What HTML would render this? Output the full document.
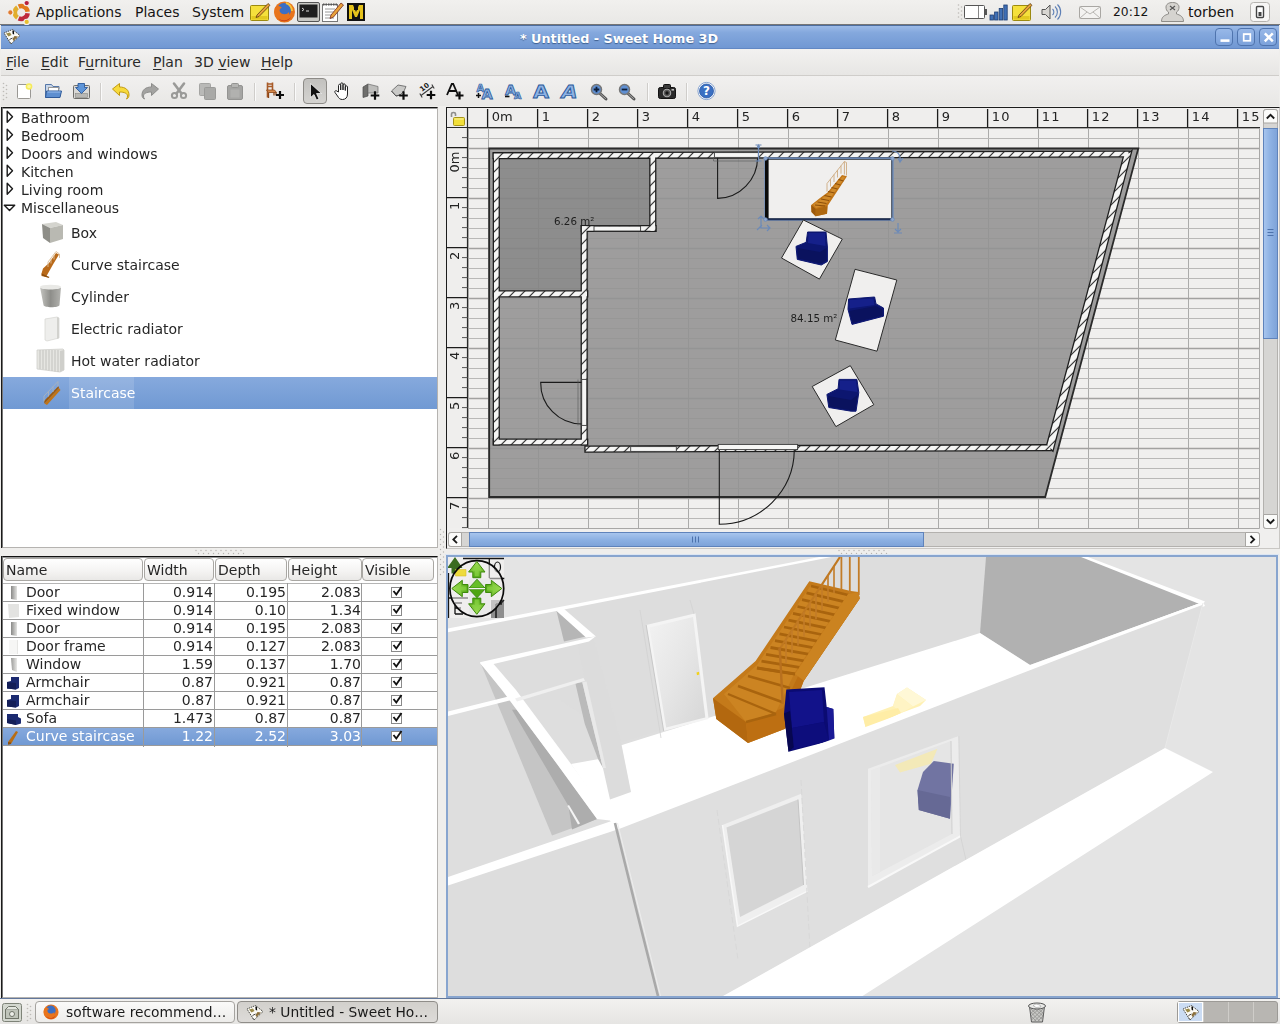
<!DOCTYPE html>
<html lang="en">
<head>
<meta charset="utf-8">
<title>* Untitled - Sweet Home 3D</title>
<style>
html,body{margin:0;padding:0}
body{width:1280px;height:1024px;position:relative;overflow:hidden;background:#EFEEEC;font-family:"DejaVu Sans","Liberation Sans",sans-serif;font-size:14px;color:#1c1c1c;line-height:1}
.a{position:absolute}
.t{position:absolute;white-space:pre;line-height:18px;height:18px}
svg{position:absolute;overflow:visible}
/* top panel */
#panel{left:0;top:0;width:1280px;height:24px;background:linear-gradient(#F1F0EE,#E9E8E6);border-bottom:1px solid #767676}
#panel .t{color:#141414;top:3px}
/* title bar */
#title{left:1px;top:25px;width:1278px;height:22px;border-bottom:1px solid #6288C4;background:linear-gradient(#9DBBE8 0%,#84A8DD 30%,#7198D3 100%);border-top:1px solid #4D6E9F}
#title .cap{left:0;width:1236px;text-align:center;top:4px;font-weight:bold;font-size:12.800px;color:#fff;text-shadow:0 1px 1px #3f5f8f}
.wb{position:absolute;top:2px;width:18px;height:18px;box-sizing:border-box;border:1px solid #4F74AE;border-radius:4px;background:linear-gradient(#98B8E8,#7CA2DB)}
/* menu */
#menu{left:1px;top:49px;width:1278px;height:26px;background:linear-gradient(#F2F1F0,#E7E6E4);border-bottom:1px solid #CFCDCA}
#menu .t{top:4px;color:#2a2a2a}
#menu u{text-decoration:underline;text-underline-offset:2px}
#tool{left:1px;top:76px;width:1278px;height:30px;background:linear-gradient(#F1F0EF,#E8E7E5)}
.sep{position:absolute;top:7px;width:1px;height:18px;background:#CFCDCA;border-right:1px solid #fafafa}
/* panels */
#tree{left:2px;top:107px;width:434px;height:439px;background:#fff;box-shadow:-1px 0 0 #1a1a1a,inset 0 1px 0 #9a9a9a;border-top:1px solid #111;border-left:1px solid #777;border-right:1px solid #B5B3B0;border-bottom:1px solid #B5B3B0}
#tree .t{left:18px;color:#262626}
#tree .c{left:68px}
#table{left:2px;top:556px;width:434px;height:440px;background:#fff;box-shadow:-1px 0 0 #1a1a1a,inset 0 1px 0 #9a9a9a;border-top:1px solid #111;border-left:1px solid #777;border-right:1px solid #B5B3B0;border-bottom:1px solid #B5B3B0}
.hd{position:absolute;top:1px;height:23px;border:1px solid #A9A7A3;border-radius:4px;background:linear-gradient(#FFFFFF,#F4F3F2 60%,#E9E8E6);box-sizing:border-box}
.hd span{position:absolute;left:2px;top:2px;line-height:18px;color:#262626}
.row{position:absolute;left:0;width:434px;height:17px;border-bottom:1px solid #9A9A9A}
.row .t{top:-1px;color:#262626}
.row .n{left:23px}
.row .r{text-align:right}
.vl{position:absolute;top:26px;width:1px;height:164px;background:#9A9A9A}
.cb{position:absolute;left:388px;top:3px;width:11px;height:11px;border:1px solid #8a8a8a;background:#fff;box-sizing:border-box}
.sel{background:linear-gradient(#86A9DD,#7099D3)}
.sel .t{color:#fff}
/* bottom panel */
#bottom{left:0;top:999px;width:1280px;height:25px;background:linear-gradient(#F2F1EF,#E6E5E3)}
.task{position:absolute;top:3px;height:20px;border:1px solid #A5A39F;border-radius:4px;box-sizing:border-box}
</style>
</head>
<body>
<div id="root" style="position:absolute;left:0;top:0;width:1280px;height:1024px;opacity:.999">
<div id="panel" class="a">
<svg style="left:4px;top:0px" width="32" height="25" viewBox="0 0 32 25"><path d="M13.49 17.68A6.4 6.4 0 0 1 13.49 7.32" fill="none" stroke="#E2AE2C" stroke-width="4.500"/><path d="M14.65 6.65A6.4 6.4 0 0 1 23.61 11.83" fill="none" stroke="#E27A1C" stroke-width="4.500"/><path d="M23.61 13.17A6.4 6.4 0 0 1 14.65 18.35" fill="none" stroke="#BE2A3C" stroke-width="4.500"/><circle cx="6.35" cy="12.50" r="2.700" fill="#E07A30" stroke="#F4EFEA" stroke-width="1.100"/><circle cx="22.70" cy="3.06" r="2.700" fill="#B8203C" stroke="#F4EFEA" stroke-width="1.100"/><circle cx="22.70" cy="21.94" r="2.700" fill="#E8C030" stroke="#F4EFEA" stroke-width="1.100"/></svg>
<span class="t" style="left:36px">Applications</span>
<span class="t" style="left:135px">Places</span>
<span class="t" style="left:192px">System</span>
<!-- tomboy -->
<svg style="left:249px;top:1px" width="23" height="22" viewBox="0 0 23 22"><rect x="1.5" y="4.5" width="18" height="15" rx="1" fill="#F5E03C" stroke="#9C8A10"/><rect x="2.5" y="15" width="16" height="3.5" fill="#E2C820"/><path d="M8 14L19 2.5l2 1.8L10 15.5l-3 1z" fill="#E8A23A" stroke="#5a3a10" stroke-width=".8"/></svg>
<!-- firefox -->
<svg style="left:272px;top:0" width="25" height="24" viewBox="0 0 25 24"><circle cx="12.5" cy="12" r="10.5" fill="#E8741C"/><circle cx="12" cy="10" r="7" fill="#3B6FC4"/><path d="M3 8C5 5 8 5.5 10 8c-2 0-3 2-2 4 2 3 7 3 9 0 1 4-2 9-7 9C5 21 1 15 3 8z" fill="#E8741C"/><path d="M5 17c3 4 10 5 14 0-2 5-10 6-14 0z" fill="#C0341A"/><path d="M14 3c3 1 6 4 6 8" stroke="#F6C33B" stroke-width="2" fill="none"/></svg>
<!-- terminal -->
<svg style="left:297px;top:2px" width="23" height="20" viewBox="0 0 23 20"><rect x=".5" y=".5" width="22" height="19" rx="1.5" fill="#C9C9C5" stroke="#555"/><rect x="2.5" y="2.5" width="18" height="13" fill="#1E1E1E"/><path d="M5 6l2 1.5L5 9M9 9h3" stroke="#ddd" stroke-width="1" fill="none"/></svg>
<!-- gedit -->
<svg style="left:320px;top:1px" width="25" height="22" viewBox="0 0 25 22"><rect x="2.5" y="3.5" width="15" height="17" fill="#fff" stroke="#777"/><path d="M3 3.5h14" stroke="#555" stroke-width="2" stroke-dasharray="1.5 1"/><path d="M5 8h10M5 11h10M5 14h8M5 17h9" stroke="#9a9a9a" stroke-width="1"/><path d="M11 14L21 2l2.5 2L13.5 16 10 17.5z" fill="#E8A23A" stroke="#7a2a1a" stroke-width=".8"/></svg>
<!-- black/yellow icon -->
<svg style="left:346px;top:2px" width="20" height="20" viewBox="0 0 20 20"><rect x="1" y="1" width="18" height="18" fill="#111"/><path d="M3 3h4l3 7 3-7h4v14h-3V8l-3 7h-2L6 8v9H3z" fill="#E5C21C"/><rect x="8" y="1" width="4" height="7" fill="#111"/></svg>
<!-- right side -->
<svg style="left:957px;top:3px" width="6" height="18" viewBox="0 0 6 18"><g fill="#BDBBB7"><circle cx="1.5" cy="2" r=".8"/><circle cx="4.5" cy="4" r=".8"/><circle cx="1.5" cy="6" r=".8"/><circle cx="4.5" cy="8" r=".8"/><circle cx="1.5" cy="10" r=".8"/><circle cx="4.5" cy="12" r=".8"/><circle cx="1.5" cy="14" r=".8"/><circle cx="4.5" cy="16" r=".8"/></g></svg>
<svg style="left:964px;top:5px" width="24" height="15" viewBox="0 0 24 15"><rect x=".5" y=".5" width="20" height="13" rx="1" fill="#fff" stroke="#555"/><rect x="21" y="4" width="2" height="6" fill="#555"/><path d="M14.5 1v12" stroke="#888"/></svg>
<svg style="left:989px;top:4px" width="20" height="17" viewBox="0 0 20 17"><g fill="#3F6FB5" stroke="#1F3F75" stroke-width=".8"><rect x="1" y="11" width="3.4" height="5"/><rect x="5.6" y="8" width="3.4" height="8"/><rect x="10.2" y="4.5" width="3.4" height="11.5"/><rect x="14.8" y="1" width="3.4" height="15"/></g></svg>
<svg style="left:1011px;top:1px" width="23" height="22" viewBox="0 0 23 22"><rect x="1.500" y="4.500" width="18" height="15" rx="1" fill="#F5E03C" stroke="#9C8A10"/><rect x="2.500" y="15" width="16" height="3.500" fill="#E2C820"/><path d="M8 14L19 2.500l2 1.800L10 15.500l-3 1z" fill="#E8A23A" stroke="#5a3a10" stroke-width=".8"/></svg>
<svg style="left:1040px;top:3px" width="22" height="18" viewBox="0 0 22 18"><path d="M2 6.5h3.5L10 2v14l-4.5-4.5H2z" fill="#D8D6D2" stroke="#555" stroke-width="1"/><path d="M12.5 6a4 4 0 0 1 0 6M15 3.5a7.5 7.5 0 0 1 0 11M17.5 1.5a10.5 10.5 0 0 1 0 15" fill="none" stroke="#5D7FB5" stroke-width="1.1"/></svg>
<svg style="left:1079px;top:6px" width="22" height="13" viewBox="0 0 22 13"><rect x=".5" y=".5" width="21" height="12" rx="1" fill="#F4F3F1" stroke="#A9A7A3"/><path d="M1 1l10 7 10-7M1 12l7-6M21 12l-7-6" fill="none" stroke="#B8B6B2"/></svg>
<span class="t" style="left:1113px;font-size:12.300px">20:12</span>
<svg style="left:1160px;top:2px" width="25" height="20" viewBox="0 0 25 20"><path d="M1.500 19.500c0-5 3.500-6.500 7-7.500v-2c-2-1-2.500-3-2.500-5C6 2.500 8.500.5 12.500.5S19 2.500 19 5c0 2-.5 4-2.500 5v2c3.500 1 7 2.500 7 7.500z" fill="#D5D3CF" stroke="#8E8C88"/><path d="M10 4l5 4M15 4l-5 4" stroke="#555" stroke-width="1.100"/></svg>
<span class="t" style="left:1188px">torben</span>
<svg style="left:1250px;top:2px" width="20" height="20" viewBox="0 0 20 20"><rect x=".5" y=".5" width="19" height="19" rx="3" fill="#F7F6F5" stroke="#B5B3AF"/><rect x="6.500" y="4.500" width="7" height="11" rx="1" fill="#fff" stroke="#444" stroke-width="1.400"/><rect x="8.500" y="10" width="3" height="4" fill="#444"/></svg>
</div>

<div id="title" class="a">
<svg style="left:2px;top:2px" width="18" height="17" viewBox="3 28 18 17"><path d="M12.500 29.500L20 35.500L11 44L4 33Z" fill="#FBFAF6" stroke="#4a4a44" stroke-width="1" stroke-dasharray="1.500 .8"/><path d="M6 33.500l4-1 1.500 2.500-3 1.500z" fill="#9A8A48"/><path d="M14.500 36l3.500 .5-4.500 4.500-1-2z" fill="#8A6E3A"/><path d="M12.300 30.500l1.600 .2.300 3.800-1.500-.5z" fill="#0a0a0a"/><path d="M9.500 39.500l3-1.500" stroke="#444" stroke-width="1"/><path d="M11 44l-1.500-2.500" stroke="#777" stroke-width="1"/></svg>
<span class="t cap">* Untitled - Sweet Home 3D</span>
<div class="wb" style="left:1214px"><svg style="left:.5px;top:0" width="15" height="16"><rect x="3.500" y="10.300" width="9" height="2.600" fill="#fff"/></svg></div>
<div class="wb" style="left:1236px"><svg style="left:.5px;top:0" width="15" height="16"><rect x="4.700" y="5.200" width="6.600" height="6.600" fill="none" stroke="#fff" stroke-width="1.700"/><path d="M4 5h8" stroke="#fff" stroke-width="1"/></svg></div>
<div class="wb" style="left:1258px"><svg style="left:.5px;top:0" width="15" height="16"><path d="M3.800 4.300l8 8M11.800 4.300l-8 8" stroke="#fff" stroke-width="2.500"/></svg></div>
</div>

<div id="menu" class="a">
<span class="t" style="left:5px"><u>F</u>ile</span>
<span class="t" style="left:40px"><u>E</u>dit</span>
<span class="t" style="left:77px">F<u>u</u>rniture</span>
<span class="t" style="left:152px"><u>P</u>lan</span>
<span class="t" style="left:193px">3D <u>v</u>iew</span>
<span class="t" style="left:260px"><u>H</u>elp</span>
</div>

<div id="tool" class="a">
<svg style="left:1px;top:6px" width="6" height="19" viewBox="0 0 6 19"><g fill="#BDBBB7"><circle cx="1.500" cy="1.500" r=".8"/><circle cx="4.500" cy="3.500" r=".8"/><circle cx="1.500" cy="5.500" r=".8"/><circle cx="4.500" cy="7.500" r=".8"/><circle cx="1.500" cy="9.500" r=".8"/><circle cx="4.500" cy="11.500" r=".8"/><circle cx="1.500" cy="13.500" r=".8"/><circle cx="4.500" cy="15.500" r=".8"/><circle cx="1.500" cy="17.500" r=".8"/></g></svg>
<!-- new -->
<svg style="left:15px;top:6px" width="18" height="18" viewBox="0 0 18 18"><rect x="1.500" y="2.500" width="13" height="14" rx="1" fill="#fff" stroke="#9A9894"/><circle cx="13" cy="4.500" r="3.300" fill="#F5EB5A"/><circle cx="13" cy="4.500" r="1.800" fill="#FBF6A0"/></svg>
<!-- open -->
<svg style="left:43px;top:6px" width="19" height="18" viewBox="0 0 19 18"><path d="M1.500 15.500v-13h6l1.500 2h6v3" fill="#C9D6E8" stroke="#5577A8"/><rect x="4.500" y="5.500" width="10" height="6" fill="#fff" stroke="#999"/><path d="M1.500 15.500l1-6.500h15l-1.500 6.500z" fill="#5E8FD0" stroke="#2F5A99"/><path d="M3.500 10h13" stroke="#9CC0EE"/></svg>
<!-- save -->
<svg style="left:71px;top:6px" width="19" height="18" viewBox="0 0 19 18"><rect x="1.500" y="3.500" width="16" height="13" rx="1" fill="#D9D8D5" stroke="#6F6E6A"/><rect x="3.500" y="11.500" width="12" height="4" fill="#B9B8B4" stroke="#8a8a86" stroke-width=".6"/><path d="M6 1.500h6.500v4h3l-6 6-6-6h2.500z" fill="#5E95D8" stroke="#2C5A9C" stroke-width=".9"/></svg>
<div class="sep" style="left:99px"></div>
<!-- undo -->
<svg style="left:110px;top:6px" width="20" height="18" viewBox="0 0 20 18"><path d="M1.500 7l7-5.500v3.500c6 0 9.500 3 9.500 8 0 2-1 3.500-2.500 4 .8-1 1-2 1-3 0-2.500-3-4-8-4v3.500z" fill="#F7DA3C" stroke="#C29A10" stroke-width="1" stroke-linejoin="round"/></svg>
<!-- redo -->
<svg style="left:139px;top:6px" width="20" height="18" viewBox="0 0 20 18"><path d="M18.500 7l-7-5.500v3.500c-6 0-9.500 3-9.500 8 0 2 1 3.500 2.500 4-.8-1-1-2-1-3 0-2.500 3-4 8-4v3.500z" fill="#A3A3A1" stroke="#8C8C8A" stroke-width="1" stroke-linejoin="round"/></svg>
<!-- cut -->
<svg style="left:169px;top:6px" width="18" height="18" viewBox="0 0 18 18"><path d="M4 1.500l7.500 10M14 1.500l-7.500 10" stroke="#9A9A98" stroke-width="2.600" stroke-linecap="round"/><circle cx="4.500" cy="13.500" r="2.600" fill="none" stroke="#9A9A98" stroke-width="2"/><circle cx="13.500" cy="13.500" r="2.600" fill="none" stroke="#9A9A98" stroke-width="2"/></svg>
<!-- copy -->
<svg style="left:197px;top:6px" width="19" height="18" viewBox="0 0 19 18"><rect x="1.500" y="1.500" width="11" height="12" rx="1" fill="#B9B9B7" stroke="#A5A5A3"/><rect x="6.500" y="5.500" width="11" height="12" rx="1" fill="#A9A9A7" stroke="#9A9A98"/></svg>
<!-- paste -->
<svg style="left:225px;top:6px" width="18" height="18" viewBox="0 0 18 18"><rect x="1.500" y="3.500" width="15" height="14" rx="1.500" fill="#A5A5A3" stroke="#949492"/><rect x="5.500" y="1.500" width="7" height="4" rx="1" fill="#B5B5B3" stroke="#949492"/><rect x="4.500" y="7.500" width="9" height="8" fill="#B1B1AF"/></svg>
<div class="sep" style="left:253px"></div>
<!-- add furniture -->
<svg style="left:263px;top:5px" width="21" height="20" viewBox="0 0 21 20"><path d="M3.500 1.500v15M8.500 1.500v9M3.500 3h5M3.500 5.500h5" stroke="#A85B28" stroke-width="1.600"/><path d="M2.500 9h8l2 2.500h-8z" fill="#D98B4C" stroke="#8A4518" stroke-width=".8"/><path d="M4.500 11.500v5.500M12 11.500v3M10 11.500v3" stroke="#8A4518" stroke-width="1.300"/><path d="M16.0 10.0v8.0M12.0 14.0h8.0" stroke="#0c0c0c" stroke-width="2.200"/></svg>
<div class="sep" style="left:293px"></div>
<!-- select pressed -->
<div class="a" style="left:302px;top:2px;width:24px;height:26px;border:1px solid #8D8B87;border-radius:4px;background:linear-gradient(#C2C1BE,#D4D3D0);box-sizing:border-box"></div>
<svg style="left:307px;top:6px" width="16" height="19" viewBox="0 0 16 19"><path d="M2.500 1.500v14l3.500-3 2.500 5.500 2.500-1-2.500-5.500h5z" fill="#111" stroke="#fff" stroke-width=".7"/></svg>
<!-- hand -->
<svg style="left:332px;top:5px" width="20" height="20" viewBox="0 0 20 20"><path d="M5.500 11V4.500c0-1.600 2.200-1.600 2.200 0V9 3c0-1.600 2.300-1.600 2.300 0v6-5c0-1.600 2.300-1.600 2.300 0v5.500-3.500c0-1.500 2.200-1.500 2.200 0V13c0 3.500-2 5.500-5 5.500-2.500 0-3.500-1-5-3.500L2 11.500c-.8-1.500 1-2.500 2-1.300z" fill="#fff" stroke="#222" stroke-width="1" stroke-linejoin="round"/></svg>
<!-- wall+ -->
<svg style="left:360px;top:5px" width="21" height="20" viewBox="0 0 21 20"><path d="M2 6l5-3v12l-5 1.500z" fill="#6E6E6C" stroke="#4a4a4a" stroke-width=".7"/><path d="M7 3l10 2.500v6.500H7z" fill="#BDBDBB" stroke="#6a6a6a" stroke-width=".7"/><path d="M14.0 10.2v8.6M9.7 14.5h8.6" stroke="#0c0c0c" stroke-width="2.200"/></svg>
<!-- room+ -->
<svg style="left:389px;top:5px" width="21" height="20" viewBox="0 0 21 20"><path d="M1.500 10L8 4l8 1.500-2 4.500-4 4-4 1z" fill="#C9C9C7" stroke="#777" stroke-width="1"/><path d="M1.500 10l4.500 5 4-1" fill="none" stroke="#555" stroke-width="1"/><path d="M13.5 10.2v8.6M9.2 14.5h8.6" stroke="#0c0c0c" stroke-width="2.200"/></svg>
<!-- dimension+ -->
<svg style="left:417px;top:5px" width="21" height="20" viewBox="0 0 21 20"><path d="M3 14.500L15 5.500M1.800 12.500l2.400 4M13.800 3.500l2.400 4" stroke="#3a3a3a" stroke-width="1.100" fill="none"/><text x="2" y="9" font-size="7" font-weight="bold" font-family="DejaVu Sans, sans-serif" fill="#222" transform="rotate(-38 6 7)">10</text><path d="M13.0 9.7v8.6M8.7 14.0h8.6" stroke="#0c0c0c" stroke-width="2.200"/></svg>
<!-- A+ -->
<svg style="left:444px;top:5px" width="21" height="20" viewBox="0 0 21 20"><path d="M2 14L6.800 3h1.400L13 14M3.800 10h7.400" stroke="#111" stroke-width="1.800" fill="none"/><path d="M14.5 10.5v8.0M10.5 14.5h8.0" stroke="#0c0c0c" stroke-width="2.200"/></svg>
<!-- AA bigger -->
<svg style="left:474px;top:5px" width="21" height="20" viewBox="0 0 21 20"><text x="1.500" y="11" font-size="10" stroke-width=".7" font-weight="bold" font-family="DejaVu Sans, Liberation Sans, sans-serif" fill="#8DB2E4" stroke="#2B5A9A">A</text><text x="6.500" y="18" font-size="14.500" stroke-width=".8" font-weight="bold" font-family="DejaVu Sans, Liberation Sans, sans-serif" fill="#8DB2E4" stroke="#2B5A9A">A</text><path d="M3.500 12v5M1 14.500h5" stroke="#111" stroke-width="1.500"/></svg>
<!-- AA smaller -->
<svg style="left:502px;top:5px" width="21" height="20" viewBox="0 0 21 20"><text x="2" y="14" font-size="14.500" stroke-width=".8" font-weight="bold" font-family="DejaVu Sans, Liberation Sans, sans-serif" fill="#8DB2E4" stroke="#2B5A9A">A</text><text x="11" y="18" font-size="9.500" stroke-width=".7" font-weight="bold" font-family="DejaVu Sans, Liberation Sans, sans-serif" fill="#8DB2E4" stroke="#2B5A9A">A</text><path d="M2 15.500h4.500" stroke="#111" stroke-width="1.600"/></svg>
<!-- A bold -->
<svg style="left:530px;top:5px" width="21" height="20" viewBox="0 0 21 20"><text x="2" y="17" font-size="18" textLength="16" lengthAdjust="spacingAndGlyphs" stroke-width=".9" font-weight="bold" font-family="DejaVu Sans, Liberation Sans, sans-serif" fill="#8DB2E4" stroke="#2B5A9A">A</text></svg>
<!-- A italic -->
<svg style="left:559px;top:5px" width="21" height="20" viewBox="0 0 21 20"><text x="1.500" y="17" font-size="18" font-style="italic" textLength="16" lengthAdjust="spacingAndGlyphs" stroke-width=".9" font-weight="bold" font-family="DejaVu Sans, Liberation Sans, sans-serif" fill="#8DB2E4" stroke="#2B5A9A">A</text></svg>
<!-- zoom in -->
<svg style="left:589px;top:5px" width="21" height="20" viewBox="0 0 21 20"><path d="M10 12.500l6 5.500" stroke="#555" stroke-width="3" stroke-linecap="round"/><path d="M10.500 13l5 4.500" stroke="#aaa" stroke-width="1" stroke-linecap="round"/><circle cx="6.500" cy="8.500" r="5" fill="#5F8FD2" stroke="#777" stroke-width="1.500"/><path d="M6.500 5.700v5.600M3.700 8.500h5.600" stroke="#0E1E3A" stroke-width="1.800"/></svg>
<!-- zoom out -->
<svg style="left:617px;top:5px" width="21" height="20" viewBox="0 0 21 20"><path d="M10 12.500l6 5.500" stroke="#555" stroke-width="3" stroke-linecap="round"/><path d="M10.500 13l5 4.500" stroke="#aaa" stroke-width="1" stroke-linecap="round"/><circle cx="6.500" cy="8.500" r="5" fill="#5F8FD2" stroke="#777" stroke-width="1.500"/><path d="M3.700 8.500h5.600" stroke="#0E1E3A" stroke-width="1.800"/></svg>
<div class="sep" style="left:646px"></div>
<!-- camera -->
<svg style="left:655px;top:5px" width="23" height="20" viewBox="0 0 23 20"><rect x="2.500" y="6.500" width="17" height="11" rx="1.800" fill="#2A2A2A" stroke="#111"/><rect x="7.500" y="3.500" width="7" height="4" rx="1" fill="#3a3a3a" stroke="#111"/><circle cx="11" cy="12" r="3.700" fill="#5a5a5a" stroke="#aaa" stroke-width="1.100"/><circle cx="11" cy="12" r="1.700" fill="#151515"/><rect x="15.500" y="8" width="2.500" height="1.600" fill="#bbb"/></svg>
<div class="sep" style="left:685px"></div>
<!-- help -->
<svg style="left:695px;top:5px" width="21" height="21" viewBox="0 0 21 21"><circle cx="10.500" cy="10" r="8.600" fill="#fff" stroke="#6A8EC6" stroke-width=".8"/><circle cx="10.500" cy="10" r="7" fill="#3A6FC2" stroke="#2C5AA6" stroke-width=".8"/><text x="10.500" y="14.300" text-anchor="middle" font-size="12" font-weight="bold" font-family="DejaVu Sans, Liberation Sans, sans-serif" fill="#fff">?</text></svg>
</div>

<div id="tree" class="a">
<svg style="left:3px;top:2px" width="8" height="14" viewBox="0 0 8 14"><path d="M1.200 1.300v11l5.300-5.500z" fill="#fff" stroke="#1a1a1a" stroke-width="1.400" stroke-linejoin="round"/></svg>
<span class="t" style="top:1px">Bathroom</span>
<svg style="left:3px;top:20px" width="8" height="14" viewBox="0 0 8 14"><path d="M1.200 1.300v11l5.300-5.500z" fill="#fff" stroke="#1a1a1a" stroke-width="1.400" stroke-linejoin="round"/></svg>
<span class="t" style="top:19px">Bedroom</span>
<svg style="left:3px;top:38px" width="8" height="14" viewBox="0 0 8 14"><path d="M1.200 1.300v11l5.300-5.500z" fill="#fff" stroke="#1a1a1a" stroke-width="1.400" stroke-linejoin="round"/></svg>
<span class="t" style="top:37px">Doors and windows</span>
<svg style="left:3px;top:56px" width="8" height="14" viewBox="0 0 8 14"><path d="M1.200 1.300v11l5.300-5.500z" fill="#fff" stroke="#1a1a1a" stroke-width="1.400" stroke-linejoin="round"/></svg>
<span class="t" style="top:55px">Kitchen</span>
<svg style="left:3px;top:74px" width="8" height="14" viewBox="0 0 8 14"><path d="M1.200 1.300v11l5.300-5.500z" fill="#fff" stroke="#1a1a1a" stroke-width="1.400" stroke-linejoin="round"/></svg>
<span class="t" style="top:73px">Living room</span>
<svg style="left:0px;top:96px" width="13" height="8" viewBox="0 0 13 8"><path d="M1.300 1.200h10.400l-5.200 5.300z" fill="#fff" stroke="#1a1a1a" stroke-width="1.400" stroke-linejoin="round"/></svg>
<span class="t" style="top:91px">Miscellaneous</span>
<svg style="left:35px;top:111px" width="28" height="28" viewBox="0 0 28 28"><path d="M4 5l14-2 7 3-13 3z" fill="#D4D4CE"/><path d="M4 5l8 4v15L5 19z" fill="#8E8E88"/><path d="M12 9l13-3v14l-13 4z" fill="#B9B9B2"/></svg>
<span class="t c" style="top:116px">Box</span>
<svg style="left:35px;top:143px" width="28" height="28" viewBox="0 0 28 28"><path d="M3.500 22.500l1.500-5 6-5.500 7-10 3 1.500-6 10-4.500 8-2.500 4.500-4.500-1z" fill="#B96A1A"/><path d="M3.500 22.500l8 3.500-1 1-6.500-2.500z" fill="#8E4E0C"/><path d="M10 11L18 0.500l3.500 2.500v3M10 11v5M13 7.500v5M16 3.500v5M21.500 3v4" stroke="#DDBE98" stroke-width=".9" fill="none"/></svg>
<span class="t c" style="top:148px">Curve staircase</span>
<svg style="left:35px;top:175px" width="28" height="28" viewBox="0 0 28 28"><defs><linearGradient id="cy" x1="0" x2="1"><stop offset="0" stop-color="#C4C4C0"/><stop offset=".5" stop-color="#8E8E8A"/><stop offset="1" stop-color="#B2B2AE"/></linearGradient></defs><path d="M2 4c0 3 21 3 21 0l-1.500 18c0 3-16 3-16 0z" fill="url(#cy)"/><ellipse cx="12.500" cy="4" rx="10.500" ry="2.300" fill="#E9E9E6"/></svg>
<span class="t c" style="top:180px">Cylinder</span>
<svg style="left:35px;top:207px" width="28" height="28" viewBox="0 0 28 28"><path d="M7 4l12-2 2 1v20l-12 3-2-1z" fill="#EEEEEC" stroke="#D8D8D4" stroke-width=".8"/><path d="M19 2l2 1v20l-2 1z" fill="#D2D2CE"/></svg>
<span class="t c" style="top:212px">Electric radiator</span>
<svg style="left:33px;top:239px" width="30" height="28" viewBox="0 0 30 28"><path d="M1 3l26-1 1 1v20l-4 2L1 22z" fill="#E6E6E2" stroke="#CFCFCB" stroke-width=".8"/><path d="M4 3v19M7 3v19.500M10 3v20M13 3v20.500M16 3v21M19 3v21.500M22 3v22" stroke="#C2C2BE" stroke-width="1"/><path d="M24 25l4-2V3l-4 1z" fill="#CFCFCB"/></svg>
<span class="t c" style="top:244px">Hot water radiator</span>
<div class="a sel" style="left:0;top:269px;width:434px;height:32px"></div>
<div class="a" style="left:66px;top:269px;width:65px;height:32px;background:rgba(255,255,255,.13)"></div>
<svg style="left:35px;top:271px" width="28" height="28" viewBox="0 0 28 28"><path d="M6.500 24.500L21 9l1.500 2L9 26z" fill="#C07418"/><path d="M6.500 24.500l-.5-2.500L20.500 7l.5 2z" fill="#9C5A0E"/><path d="M6 17L20 2.500M6 17v5.500M20 2.500V7.500M10.500 12.500v5M15 7.500v5.500" stroke="#A9B2BE" stroke-width=".9" fill="none"/></svg>
<span class="t c" style="top:276px;color:#fff">Staircase</span>
</div>
<div id="table" class="a">
<div class="hd" style="left:0px;width:140px"><span>Name</span></div>
<div class="hd" style="left:141px;width:70px"><span>Width</span></div>
<div class="hd" style="left:212px;width:72px"><span>Depth</span></div>
<div class="hd" style="left:285px;width:74px"><span>Height</span></div>
<div class="hd" style="left:359px;width:72px"><span>Visible</span></div>
<div class="row" style="top:27px">
<svg style="left:5px;top:1px" width="12" height="16" viewBox="0 0 12 16"><defs><linearGradient id="dg0" x1="0" x2="1"><stop offset="0" stop-color="#8A8A88"/><stop offset="1" stop-color="#E2E2E0"/></linearGradient></defs><path d="M3 1l6 0v14l-6-1z" fill="url(#dg0)"/></svg>
<span class="t n">Door</span>
<span class="t r" style="left:141px;width:69px">0.914</span>
<span class="t r" style="left:212px;width:71px">0.195</span>
<span class="t r" style="left:285px;width:73px">2.083</span>
<div class="cb"><svg style="left:0;top:-2px" width="11" height="11" viewBox="0 0 11 11"><path d="M1.500 5l2.800 3.500L9.500 1" fill="none" stroke="#111" stroke-width="1.900"/></svg></div>
</div>
<div class="row" style="top:45px">
<svg style="left:4px;top:1px" width="14" height="16" viewBox="0 0 14 16"><path d="M1 1l11 0v13l-10 1z" fill="#E3E3E1"/></svg>
<span class="t n">Fixed window</span>
<span class="t r" style="left:141px;width:69px">0.914</span>
<span class="t r" style="left:212px;width:71px">0.10</span>
<span class="t r" style="left:285px;width:73px">1.34</span>
<div class="cb"><svg style="left:0;top:-2px" width="11" height="11" viewBox="0 0 11 11"><path d="M1.500 5l2.800 3.500L9.500 1" fill="none" stroke="#111" stroke-width="1.900"/></svg></div>
</div>
<div class="row" style="top:63px">
<svg style="left:5px;top:1px" width="12" height="16" viewBox="0 0 12 16"><defs><linearGradient id="dg2" x1="0" x2="1"><stop offset="0" stop-color="#8A8A88"/><stop offset="1" stop-color="#E2E2E0"/></linearGradient></defs><path d="M3 1l6 0v14l-6-1z" fill="url(#dg2)"/></svg>
<span class="t n">Door</span>
<span class="t r" style="left:141px;width:69px">0.914</span>
<span class="t r" style="left:212px;width:71px">0.195</span>
<span class="t r" style="left:285px;width:73px">2.083</span>
<div class="cb"><svg style="left:0;top:-2px" width="11" height="11" viewBox="0 0 11 11"><path d="M1.500 5l2.800 3.500L9.500 1" fill="none" stroke="#111" stroke-width="1.900"/></svg></div>
</div>
<div class="row" style="top:81px">
<svg style="left:4px;top:1px" width="14" height="16" viewBox="0 0 14 16"><path d="M2 1h9v14H2z" fill="#F6F6F5"/><path d="M10 1h1v14h-1z" fill="#E6E6E4"/></svg>
<span class="t n">Door frame</span>
<span class="t r" style="left:141px;width:69px">0.914</span>
<span class="t r" style="left:212px;width:71px">0.127</span>
<span class="t r" style="left:285px;width:73px">2.083</span>
<div class="cb"><svg style="left:0;top:-2px" width="11" height="11" viewBox="0 0 11 11"><path d="M1.500 5l2.800 3.500L9.500 1" fill="none" stroke="#111" stroke-width="1.900"/></svg></div>
</div>
<div class="row" style="top:99px">
<svg style="left:5px;top:1px" width="12" height="16" viewBox="0 0 12 16"><defs><linearGradient id="dg4" x1="0" x2="1"><stop offset="0" stop-color="#9A9A98"/><stop offset="1" stop-color="#E8E8E6"/></linearGradient></defs><path d="M3 1l6 0v14l-5-2z" fill="url(#dg4)"/></svg>
<span class="t n">Window</span>
<span class="t r" style="left:141px;width:69px">1.59</span>
<span class="t r" style="left:212px;width:71px">0.137</span>
<span class="t r" style="left:285px;width:73px">1.70</span>
<div class="cb"><svg style="left:0;top:-2px" width="11" height="11" viewBox="0 0 11 11"><path d="M1.500 5l2.800 3.500L9.500 1" fill="none" stroke="#111" stroke-width="1.900"/></svg></div>
</div>
<div class="row" style="top:117px">
<svg style="left:2px;top:1px" width="16" height="16" viewBox="0 0 16 16"><path d="M6 2h8v11l-3 1.500-9-1V7l4-1z" fill="#1B2A70"/><path d="M2 7l9 1v6.500l-9-1z" fill="#141F58"/></svg>
<span class="t n">Armchair</span>
<span class="t r" style="left:141px;width:69px">0.87</span>
<span class="t r" style="left:212px;width:71px">0.921</span>
<span class="t r" style="left:285px;width:73px">0.87</span>
<div class="cb"><svg style="left:0;top:-2px" width="11" height="11" viewBox="0 0 11 11"><path d="M1.500 5l2.800 3.500L9.500 1" fill="none" stroke="#111" stroke-width="1.900"/></svg></div>
</div>
<div class="row" style="top:135px">
<svg style="left:2px;top:1px" width="16" height="16" viewBox="0 0 16 16"><path d="M6 2h8v11l-3 1.500-9-1V7l4-1z" fill="#1B2A70"/><path d="M2 7l9 1v6.500l-9-1z" fill="#141F58"/></svg>
<span class="t n">Armchair</span>
<span class="t r" style="left:141px;width:69px">0.87</span>
<span class="t r" style="left:212px;width:71px">0.921</span>
<span class="t r" style="left:285px;width:73px">0.87</span>
<div class="cb"><svg style="left:0;top:-2px" width="11" height="11" viewBox="0 0 11 11"><path d="M1.500 5l2.800 3.500L9.500 1" fill="none" stroke="#111" stroke-width="1.900"/></svg></div>
</div>
<div class="row" style="top:153px">
<svg style="left:2px;top:1px" width="17" height="16" viewBox="0 0 17 16"><path d="M2 3h11v3l3 1.500v5l-5 1.500-9-2z" fill="#1B2A70"/><path d="M2 8l9 1.500v4.500l-9-2z" fill="#141F58"/></svg>
<span class="t n">Sofa</span>
<span class="t r" style="left:141px;width:69px">1.473</span>
<span class="t r" style="left:212px;width:71px">0.87</span>
<span class="t r" style="left:285px;width:73px">0.87</span>
<div class="cb"><svg style="left:0;top:-2px" width="11" height="11" viewBox="0 0 11 11"><path d="M1.500 5l2.800 3.500L9.500 1" fill="none" stroke="#111" stroke-width="1.900"/></svg></div>
</div>
<div class="row sel" style="top:171px">
<svg style="left:3px;top:1px" width="14" height="16" viewBox="0 0 14 16"><path d="M2 13L10 2l2 1L5 15l-3 .5z" fill="#B86D14"/><path d="M2 13l3 .5v1.500l-3 .5z" fill="#8A4D0A"/></svg>
<span class="t n">Curve staircase</span>
<span class="t r" style="left:141px;width:69px">1.22</span>
<span class="t r" style="left:212px;width:71px">2.52</span>
<span class="t r" style="left:285px;width:73px">3.03</span>
<div class="cb"><svg style="left:0;top:-2px" width="11" height="11" viewBox="0 0 11 11"><path d="M1.500 5l2.800 3.500L9.500 1" fill="none" stroke="#111" stroke-width="1.900"/></svg></div>
</div>
<div class="a" style="left:0;top:26px;width:434px;height:1px;background:#B5B5B5"></div>
<div class="vl" style="left:140px"></div>
<div class="vl" style="left:211px"></div>
<div class="vl" style="left:284px"></div>
<div class="vl" style="left:358px"></div>
</div>
<div class="a" style="left:446px;top:107px;width:832px;height:440px;background:#F0EFEE;border-top:1px solid #1c1c1c;border-left:1px solid #1c1c1c;border-right:1px solid #C9C7C4;border-bottom:1px solid #C9C7C4"></div>
<svg style="left:0;top:0" width="1280" height="560" viewBox="0 0 1280 560" font-family="DejaVu Sans, Liberation Sans, sans-serif">
<defs>
<clipPath id="gc"><rect x="468" y="128" width="792" height="400"/></clipPath>
<pattern id="hat" width="10" height="10" patternUnits="userSpaceOnUse" patternTransform="translate(5.900 0)"><rect width="10" height="10" fill="#F5F5F4"/><path d="M-2 12L12 -2M-7 7L7 -7M3 17L17 3" stroke="#2a2a2a" stroke-width="1.150"/></pattern>
<linearGradient id="thv" x1="0" x2="1" y1="0" y2="0"><stop offset="0" stop-color="#A9C6EE"/><stop offset=".5" stop-color="#8DB1E3"/><stop offset="1" stop-color="#7DA2D8"/></linearGradient>
<linearGradient id="thh" x1="0" x2="0" y1="0" y2="1"><stop offset="0" stop-color="#A9C6EE"/><stop offset=".5" stop-color="#8DB1E3"/><stop offset="1" stop-color="#7DA2D8"/></linearGradient>
</defs>
<g clip-path="url(#gc)">
<path d="M488 128V528M538 128V528M588 128V528M638 128V528M688 128V528M738 128V528M788 128V528M838 128V528M888 128V528M938 128V528M988 128V528M1038 128V528M1088 128V528M1138 128V528M1188 128V528M1238 128V528" stroke="#ABABAA" stroke-width="1" transform="translate(.5 0)" fill="none"/>
<path d="M468 138H1260M468 158H1260M468 168H1260M468 178H1260M468 188H1260M468 208H1260M468 218H1260M468 228H1260M468 238H1260M468 258H1260M468 268H1260M468 278H1260M468 288H1260M468 308H1260M468 318H1260M468 328H1260M468 338H1260M468 358H1260M468 368H1260M468 378H1260M468 388H1260M468 408H1260M468 418H1260M468 428H1260M468 438H1260M468 458H1260M468 468H1260M468 478H1260M468 488H1260M468 508H1260M468 518H1260" stroke="#B9B8B7" stroke-width="1" transform="translate(0 .5)" fill="none"/>
<path d="M468 148H1260M468 198H1260M468 248H1260M468 298H1260M468 348H1260M468 398H1260M468 448H1260M468 498H1260" stroke="#A2A1A0" stroke-width="1.600" transform="translate(0 .5)" fill="none"/>
<polygon points="489.200,148.500 1138.300,148.500 1045.200,497 489.200,497" fill="#929292" fill-opacity=".88" stroke="#2a2a2a" stroke-width="1.800"/>
<polygon points="499,159 650,158.600 650,226 581.500,226 581.500,291.300 499,291.300" fill="#6a6a6a" fill-opacity=".32"/>
<polygon points="493.8,158.0 1128.5,156.3 1128.5,151.8 493.8,153.4" fill="none" stroke="#1e1e1e" stroke-width="2.600" stroke-linejoin="miter"/>
<polygon points="494.0,154.0 494.0,444.3 498.6,444.3 498.6,154.0" fill="none" stroke="#1e1e1e" stroke-width="2.600" stroke-linejoin="miter"/>
<polygon points="494.0,296.2 587.0,296.2 587.0,291.6 494.0,291.6" fill="none" stroke="#1e1e1e" stroke-width="2.600" stroke-linejoin="miter"/>
<polygon points="494.0,444.3 587.0,444.3 587.0,439.7 494.0,439.7" fill="none" stroke="#1e1e1e" stroke-width="2.600" stroke-linejoin="miter"/>
<polygon points="581.9,226.3 581.9,444.3 586.5,444.3 586.5,226.3" fill="none" stroke="#1e1e1e" stroke-width="2.600" stroke-linejoin="miter"/>
<polygon points="582.0,230.8 655.3,230.8 655.3,226.2 582.0,226.2" fill="none" stroke="#1e1e1e" stroke-width="2.600" stroke-linejoin="miter"/>
<polygon points="650.5,154.0 650.5,230.8 655.1,230.8 655.1,154.0" fill="none" stroke="#1e1e1e" stroke-width="2.600" stroke-linejoin="miter"/>
<polygon points="585.6,451.4 1050.5,450.0 1050.5,445.4 585.6,446.8" fill="none" stroke="#1e1e1e" stroke-width="2.600" stroke-linejoin="miter"/>
<polygon points="1124.2,156.3 1130.9,151.9 1052.6,450.1 1047.3,445.2" fill="none" stroke="#1e1e1e" stroke-width="2.600" stroke-linejoin="miter"/>
<polygon points="493.8,158.0 1128.5,156.3 1128.5,151.8 493.8,153.4" fill="url(#hat)"/>
<polygon points="494.0,154.0 494.0,444.3 498.6,444.3 498.6,154.0" fill="url(#hat)"/>
<polygon points="494.0,296.2 587.0,296.2 587.0,291.6 494.0,291.6" fill="url(#hat)"/>
<polygon points="494.0,444.3 587.0,444.3 587.0,439.7 494.0,439.7" fill="url(#hat)"/>
<polygon points="581.9,226.3 581.9,444.3 586.5,444.3 586.5,226.3" fill="url(#hat)"/>
<polygon points="582.0,230.8 655.3,230.8 655.3,226.2 582.0,226.2" fill="url(#hat)"/>
<polygon points="650.5,154.0 650.5,230.8 655.1,230.8 655.1,154.0" fill="url(#hat)"/>
<polygon points="585.6,451.4 1050.5,450.0 1050.5,445.4 585.6,446.8" fill="url(#hat)"/>
<polygon points="1124.2,156.3 1130.9,151.9 1052.6,450.1 1047.3,445.2" fill="url(#hat)"/>
<rect x="594.0" y="226.2" width="46.6" height="4.8" fill="#F6F6F5" stroke="#3a3a3a" stroke-width=".9"/>
<rect x="714.4" y="152.6" width="44.0" height="4.8" fill="#F6F6F5" stroke="#3a3a3a" stroke-width=".9"/>
<rect x="581.7" y="379.4" width="5.0" height="46.0" fill="#F6F6F5" stroke="#3a3a3a" stroke-width=".9"/>
<rect x="630.7" y="446.6" width="45.6" height="4.8" fill="#F6F6F5" stroke="#3a3a3a" stroke-width=".9"/>
<rect x="718.2" y="444.4" width="79.4" height="5.2" fill="#F6F6F5" stroke="#3a3a3a" stroke-width=".9"/>
<path d="M717.600 157.500V198.400A41 41 0 0 0 757.600 157.500" fill="none" stroke="#1a1a1a" stroke-width="1.100"/>
<path d="M713.500 157.500h45v3.500h-45z" fill="none" stroke="#555" stroke-width=".6"/>
<path d="M581.500 382.400H540.700A41 41 0 0 0 581.500 424" fill="none" stroke="#1a1a1a" stroke-width="1.100"/>
<path d="M578 379.500v46" fill="none" stroke="#555" stroke-width=".6"/>
<path d="M719.300 450V524.200A75 75 0 0 0 794.300 450" fill="none" stroke="#1a1a1a" stroke-width="1.100"/>
<rect x="765.500" y="158.500" width="127" height="61" fill="#F0EFEE" stroke="#6F8DBB" stroke-width="2.400"/>
<rect x="766.300" y="159.300" width="125.500" height="59.500" fill="none" stroke="#333" stroke-width=".8"/>
<rect x="765" y="158.500" width="3.600" height="61" fill="#0a0a0a"/>
<path d="M765 219.300H892.500" stroke="#1E2E55" stroke-width="1.800"/>
<polygon points="811.2,205.0 820.0,198.0 827.5,192.5 842.0,175.0 847.0,176.2 827.5,206.0 827.0,213.8 815.6,216.2 811.5,212.0" fill="#C27618"/>
<polygon points="811.2,205.0 811.5,212.0 815.6,216.2 815.8,209.0" fill="#9C5A0C"/>
<polygon points="815.8,209.0 815.6,216.2 827.0,213.8 827.5,206.0" fill="#AE6810"/>
<polygon points="813.0,204.5 821.0,199.0 828.5,193.5 842.5,176.5 845.0,177.2 826.0,204.5 816.0,208.0" fill="#D08A2A"/>
<path d="M815 205l10 1M817.500 202l9 1.500M821 199l8 1.500M824.500 195.500l7 1.500M828 191.500l6.500 1.500M831.500 187.500l6 1.500M835 183.500l5.500 1.500M838.500 179.500l5 1.500" stroke="#8E500A" stroke-width="1.100" fill="none"/>
<path d="M827 183.500L844.400 161.500L846.500 162.500V175.500M827 183.500v8M830.500 179v7.500M834 174.500v7.500M837.500 170v7.500M841 165.700v8M844.400 161.500v13" stroke="#CDAA80" stroke-width=".9" fill="none"/>
<g stroke="#6C8AB8" stroke-width="1.200" fill="none">
<path d="M758.500 145v16M755.500 145h6M755.500 161h6M757 148l1.500-3 1.500 3"/>
<path d="M761 216v12h9M758 219l3-3 3 3M767 225l3 3-3 3M757 230l5-5"/>
<path d="M892 151c6 0 9 4 8 11M898 158l2 4 3-4"/><path d="M898 223v9M895 229l3 3 3-3M894 233h8"/>
</g>
<circle cx="765.5" cy="158.5" r="1.800" fill="#8FA8CF" stroke="#6C8AB8" stroke-width=".8"/>
<circle cx="892.5" cy="158.5" r="1.800" fill="#8FA8CF" stroke="#6C8AB8" stroke-width=".8"/>
<circle cx="765.5" cy="219.5" r="1.800" fill="#8FA8CF" stroke="#6C8AB8" stroke-width=".8"/>
<circle cx="892.5" cy="219.5" r="1.800" fill="#8FA8CF" stroke="#6C8AB8" stroke-width=".8"/>
<polygon points="803.4,220.0 842.3,239.1 819.4,279.1 781.5,258.0" fill="#F0EFEE" stroke="#2a2a2a" stroke-width="1"/>
<polygon points="807.6,232.0 826.0,232.0 827.4,247.0 827.4,261.5 821.3,265.0 797.3,259.4 796.0,246.4 806.2,242.3" fill="#0C1670" stroke="#0C1670" stroke-width="1" stroke-linejoin="round"/>
<polygon points="808.5,233.0 825.0,233.0 825.5,246.0 808.0,243.0" fill="#15208A"/>
<polygon points="797.5,248.0 820.0,252.0 826.5,248.0 826.5,260.5 821.0,263.5 798.0,258.5" fill="#0A125E"/>
<polygon points="855.0,269.3 896.8,280.0 877.0,351.2 835.3,340.0" fill="#F0EFEE" stroke="#2a2a2a" stroke-width="1"/>
<polygon points="848.6,299.0 874.6,297.0 876.0,303.9 883.5,308.0 883.5,316.2 852.0,324.4 848.0,309.3" fill="#0C1670" stroke="#0C1670" stroke-width="1" stroke-linejoin="round"/>
<polygon points="849.5,300.0 873.5,298.2 874.5,305.0 849.5,308.5" fill="#15208A"/>
<polygon points="849.0,311.0 876.0,306.0 882.5,309.5 882.5,315.5 852.5,323.0" fill="#0A125E"/>
<polygon points="850.3,365.7 873.8,404.7 835.9,426.6 812.2,386.5" fill="#F0EFEE" stroke="#2a2a2a" stroke-width="1"/>
<polygon points="839.0,379.4 856.9,379.4 858.8,392.5 856.0,411.2 851.2,411.2 828.8,407.5 826.9,394.4 838.1,388.8" fill="#0C1670" stroke="#0C1670" stroke-width="1" stroke-linejoin="round"/>
<polygon points="840.0,380.4 856.0,380.4 857.5,392.0 839.5,389.5" fill="#15208A"/>
<polygon points="828.0,396.0 851.0,400.0 857.5,395.0 855.5,410.0 851.0,410.2 829.5,406.5" fill="#0A125E"/>
<text x="554" y="224.600" font-size="10.300" fill="#1e1e1e">6.26 m²</text>
<text x="790.500" y="322.400" font-size="10.300" fill="#1e1e1e">84.15 m²</text>
</g>
<rect x="447" y="108" width="813" height="19.500" fill="#EFEEED"/>
<rect x="447" y="108" width="20.500" height="420" fill="#EFEEED"/>
<path d="M447 127.500H1260M467.500 108V528" stroke="#2a2a2a" stroke-width="1.200" fill="none"/>
<path d="M468 128.500H1260M468.500 128V528" stroke="#A8A7A6" stroke-width="1" fill="none"/>
<path d="M1259.500 128V528.500H468" stroke="#A8A7A6" stroke-width="1" fill="none"/>
<path d="M487.6 109V127.500M537.6 109V127.500M587.6 109V127.500M637.6 109V127.500M687.6 109V127.500M737.6 109V127.500M787.6 109V127.500M837.6 109V127.500M887.6 109V127.500M937.6 109V127.500M987.6 109V127.500M1037.6 109V127.500M1087.6 109V127.500M1137.6 109V127.500M1187.6 109V127.500M1237.6 109V127.500" stroke="#1c1c1c" stroke-width="1.300" fill="none"/>
<text x="491.8" y="120.800" font-size="13" fill="#222">0m</text>
<text x="541.8" y="120.800" font-size="13" fill="#222">1</text>
<text x="591.8" y="120.800" font-size="13" fill="#222">2</text>
<text x="641.8" y="120.800" font-size="13" fill="#222">3</text>
<text x="691.8" y="120.800" font-size="13" fill="#222">4</text>
<text x="741.8" y="120.800" font-size="13" fill="#222">5</text>
<text x="791.8" y="120.800" font-size="13" fill="#222">6</text>
<text x="841.8" y="120.800" font-size="13" fill="#222">7</text>
<text x="891.8" y="120.800" font-size="13" fill="#222">8</text>
<text x="941.8" y="120.800" font-size="13" fill="#222">9</text>
<text x="991.8" y="120.800" font-size="13" fill="#222" letter-spacing="1.200">10</text>
<text x="1041.8" y="120.800" font-size="13" fill="#222" letter-spacing="1.200">11</text>
<text x="1091.8" y="120.800" font-size="13" fill="#222" letter-spacing="1.200">12</text>
<text x="1141.8" y="120.800" font-size="13" fill="#222" letter-spacing="1.200">13</text>
<text x="1191.8" y="120.800" font-size="13" fill="#222" letter-spacing="1.200">14</text>
<text x="1241.8" y="120.800" font-size="13" fill="#222" letter-spacing="1.200">15</text>
<rect x="1260" y="108" width="3" height="20" fill="#F0EFEE"/>
<path d="M447 147.6H467.500M447 197.6H467.500M447 247.6H467.500M447 297.6H467.500M447 347.6H467.500M447 397.6H467.500M447 447.6H467.500M447 497.6H467.500" stroke="#1c1c1c" stroke-width="1.300" fill="none"/>
<path d="M462 137.6H467.500M462 157.6H467.500M462 167.6H467.500M462 177.6H467.500M462 187.6H467.500M462 207.6H467.500M462 217.6H467.500M462 227.6H467.500M462 237.6H467.500M462 257.6H467.500M462 267.6H467.500M462 277.6H467.500M462 287.6H467.500M462 307.6H467.500M462 317.6H467.500M462 327.6H467.500M462 337.6H467.500M462 357.6H467.500M462 367.6H467.500M462 377.6H467.500M462 387.6H467.500M462 407.6H467.500M462 417.6H467.500M462 427.6H467.500M462 437.6H467.500M462 457.6H467.500M462 467.6H467.500M462 477.6H467.500M462 487.6H467.500M462 507.6H467.500M462 517.6H467.500M462 527.6H467.500" stroke="#555" stroke-width="1" fill="none"/>
<text transform="translate(459.200 151.6) rotate(-90)" text-anchor="end" font-size="13" fill="#222">0m</text>
<text transform="translate(459.200 201.6) rotate(-90)" text-anchor="end" font-size="13" fill="#222">1</text>
<text transform="translate(459.200 251.6) rotate(-90)" text-anchor="end" font-size="13" fill="#222">2</text>
<text transform="translate(459.200 301.6) rotate(-90)" text-anchor="end" font-size="13" fill="#222">3</text>
<text transform="translate(459.200 351.6) rotate(-90)" text-anchor="end" font-size="13" fill="#222">4</text>
<text transform="translate(459.200 401.6) rotate(-90)" text-anchor="end" font-size="13" fill="#222">5</text>
<text transform="translate(459.200 451.6) rotate(-90)" text-anchor="end" font-size="13" fill="#222">6</text>
<text transform="translate(459.200 501.6) rotate(-90)" text-anchor="end" font-size="13" fill="#222">7</text>
<g transform="translate(450 111)"><path d="M1.500 6V3.200C1.500 1 5.500 1 5.500 3.200V5" fill="none" stroke="#8E8E8C" stroke-width="1.600"/><rect x="3.500" y="6.500" width="11" height="8" rx="1" fill="#F2DF3A" stroke="#A8961A"/><path d="M4.500 8h9" stroke="#FBF3A0"/></g>
<rect x="1263.500" y="109.500" width="14" height="419" rx="2" fill="#D6D5D3" stroke="#B3B1AE"/>
<rect x="1263.500" y="128.500" width="14" height="210" fill="url(#thv)" stroke="#5F83BB"/>
<path d="M1267.500 229.500h6M1267.500 232.500h6M1267.500 235.500h6" stroke="#4D72AC" stroke-width="1"/>
<path d="M1263.500 123V112a2.500 2.500 0 0 1 2.500-2.500h9a2.500 2.500 0 0 1 2.500 2.500V123z" fill="#FBFBFA" stroke="#A8A6A3"/>
<path d="M1266.800 118.500l3.700-3.700 3.700 3.700" fill="none" stroke="#1a1a1a" stroke-width="1.800"/>
<path d="M1263.500 514.500V526a2.500 2.500 0 0 0 2.500 2.500h9a2.500 2.500 0 0 0 2.500-2.500V514.500z" fill="#FBFBFA" stroke="#A8A6A3"/>
<path d="M1266.800 519.500l3.700 3.700 3.700-3.700" fill="none" stroke="#1a1a1a" stroke-width="1.800"/>
<rect x="448.500" y="532.500" width="811" height="14" rx="2" fill="#D6D5D3" stroke="#B3B1AE"/>
<rect x="469.500" y="532.500" width="454" height="14" fill="url(#thh)" stroke="#5F83BB"/>
<path d="M692.500 536.500v6M695.500 536.500v6M698.500 536.500v6" stroke="#4D72AC" stroke-width="1"/>
<path d="M461.500 532.500H451a2.500 2.500 0 0 0-2.500 2.500v9a2.500 2.500 0 0 0 2.500 2.500h10.500z" fill="#FBFBFA" stroke="#A8A6A3"/>
<path d="M457 535.800l-3.700 3.700 3.700 3.700" fill="none" stroke="#1a1a1a" stroke-width="1.800"/>
<path d="M1245.500 532.500H1257a2.500 2.500 0 0 1 2.500 2.500v9a2.500 2.500 0 0 1-2.500 2.500h-11.500z" fill="#FBFBFA" stroke="#A8A6A3"/>
<path d="M1250.500 535.800l3.700 3.700-3.700 3.700" fill="none" stroke="#1a1a1a" stroke-width="1.800"/>
<g fill="#B5B3B0"><circle cx="440.5" cy="529.5" r=".7"/><circle cx="443.5" cy="532.0" r=".7"/><circle cx="440.5" cy="534.5" r=".7"/><circle cx="443.5" cy="537.0" r=".7"/><circle cx="440.5" cy="539.5" r=".7"/><circle cx="443.5" cy="542.0" r=".7"/><circle cx="440.5" cy="544.5" r=".7"/><circle cx="443.5" cy="547.0" r=".7"/><circle cx="440.5" cy="549.5" r=".7"/><circle cx="443.5" cy="552.0" r=".7"/><circle cx="440.5" cy="554.5" r=".7"/><circle cx="443.5" cy="557.0" r=".7"/><circle cx="440.5" cy="559.5" r=".7"/><circle cx="443.5" cy="562.0" r=".7"/><circle cx="440.5" cy="564.5" r=".7"/><circle cx="443.5" cy="567.0" r=".7"/><circle cx="440.5" cy="569.5" r=".7"/><circle cx="443.5" cy="572.0" r=".7"/><circle cx="440.5" cy="574.5" r=".7"/></g>
<g fill="#B5B3B0"><circle cx="196.0" cy="550.5" r=".7"/><circle cx="839.0" cy="550.5" r=".7"/><circle cx="198.5" cy="553.5" r=".7"/><circle cx="841.5" cy="553.5" r=".7"/><circle cx="201.0" cy="550.5" r=".7"/><circle cx="844.0" cy="550.5" r=".7"/><circle cx="203.5" cy="553.5" r=".7"/><circle cx="846.5" cy="553.5" r=".7"/><circle cx="206.0" cy="550.5" r=".7"/><circle cx="849.0" cy="550.5" r=".7"/><circle cx="208.5" cy="553.5" r=".7"/><circle cx="851.5" cy="553.5" r=".7"/><circle cx="211.0" cy="550.5" r=".7"/><circle cx="854.0" cy="550.5" r=".7"/><circle cx="213.5" cy="553.5" r=".7"/><circle cx="856.5" cy="553.5" r=".7"/><circle cx="216.0" cy="550.5" r=".7"/><circle cx="859.0" cy="550.5" r=".7"/><circle cx="218.5" cy="553.5" r=".7"/><circle cx="861.5" cy="553.5" r=".7"/><circle cx="221.0" cy="550.5" r=".7"/><circle cx="864.0" cy="550.5" r=".7"/><circle cx="223.5" cy="553.5" r=".7"/><circle cx="866.5" cy="553.5" r=".7"/><circle cx="226.0" cy="550.5" r=".7"/><circle cx="869.0" cy="550.5" r=".7"/><circle cx="228.5" cy="553.5" r=".7"/><circle cx="871.5" cy="553.5" r=".7"/><circle cx="231.0" cy="550.5" r=".7"/><circle cx="874.0" cy="550.5" r=".7"/><circle cx="233.5" cy="553.5" r=".7"/><circle cx="876.5" cy="553.5" r=".7"/><circle cx="236.0" cy="550.5" r=".7"/><circle cx="879.0" cy="550.5" r=".7"/><circle cx="238.5" cy="553.5" r=".7"/><circle cx="881.5" cy="553.5" r=".7"/><circle cx="241.0" cy="550.5" r=".7"/><circle cx="884.0" cy="550.5" r=".7"/><circle cx="243.5" cy="553.5" r=".7"/><circle cx="886.5" cy="553.5" r=".7"/></g>
</svg>
<div class="a" style="left:445px;top:554px;width:834px;height:1px;background:#DCE6F3"></div>
<div class="a" style="left:446px;top:555px;width:832px;height:443px;box-sizing:border-box;border:2px solid #88A5CF;background:#E4E4E4"></div>
<svg style="left:448px;top:557px" width="829" height="439" viewBox="448 557 829 439" font-family="DejaVu Sans, Liberation Sans, sans-serif">
<defs><clipPath id="vc"><rect x="448" y="557" width="829" height="439"/></clipPath>
<linearGradient id="door3" x1="0" x2="1" y1="0" y2="1"><stop offset="0" stop-color="#F2F2F2"/><stop offset=".5" stop-color="#E6E6E6"/><stop offset="1" stop-color="#D6D6D6"/></linearGradient>
<linearGradient id="ga" x1="0" x2="0" y1="0" y2="1"><stop offset="0" stop-color="#A6E05A"/><stop offset="1" stop-color="#4FA512"/></linearGradient>
</defs><g clip-path="url(#vc)" style="overflow:hidden">
<polygon points="448.0,630.0 826.0,556.5 986.0,556.5 980.0,633.5 1030.0,665.0 1203.0,602.0 1165.0,748.0 741.0,986.0 723.0,996.0 448.0,996.0" fill="#DEDEDE"/>
<polygon points="448.0,630.0 826.0,556.5 986.0,556.5 980.0,633.5 622.0,742.0 560.0,700.0 448.0,700.0" fill="#DDDDDD"/>
<polygon points="986.0,557.0 1083.0,557.0 1203.0,602.0 1030.0,665.0 980.0,633.0" fill="#B1B1B1"/>
<polygon points="1081.0,557.0 1088.0,557.0 1205.0,601.5 1202.0,605.0" fill="#FFFFFF"/>
<polygon points="571.0,764.0 599.0,759.0 622.0,745.0 980.0,633.0 1030.0,665.0 1203.0,602.0 1205.0,606.0 614.0,826.0" fill="#FFFFFF"/>
<polygon points="448.0,628.5 822.0,556.5 834.0,556.5 448.0,632.3" fill="#FFFFFF"/>
<polygon points="646.2,625.0 695.5,613.3 708.6,719.0 663.7,731.0" fill="#F4F4F4"/>
<polygon points="649.5,627.5 693.0,617.0 705.3,717.5 666.2,727.5" fill="url(#door3)"/>
<polygon points="696.5,672.5 699.0,671.8 699.3,674.5 697.0,675.2" fill="#F2D21C"/>
<path d="M646.200 625L663.700 731" stroke="#C8C8C8" stroke-width="1" fill="none"/>
<path d="M640 610l21 128M690 600l4 14" stroke="#D2D2D2" stroke-width=".8" fill="none"/>
<polygon points="863.0,717.0 893.0,706.0 897.0,694.0 907.0,687.5 926.0,700.0 920.0,706.0 901.0,713.0 866.0,729.0" fill="#FFF1B4"/>
<polygon points="897.0,694.0 907.0,687.5 926.0,700.0 913.0,706.5" fill="#FFF8D6"/>
<polygon points="893.0,706.0 897.0,694.0 913.0,706.5 901.0,713.0" fill="#FFF4C4"/>
<polygon points="863.0,717.0 866.0,729.0 901.0,713.0 898.0,708.0" fill="#FFEDA6"/>
<polygon points="713.0,698.2 755.6,661.0 809.3,581.2 850.8,591.0 858.5,592.0 859.6,598.7 803.8,680.7 785.2,728.8 748.0,743.0 716.3,719.0" fill="#C47A1A"/>
<polygon points="713.0,698.2 716.3,719.0 748.0,743.0 746.0,722.0" fill="#B3680F"/>
<polygon points="746.0,722.0 748.0,743.0 785.2,728.8 803.8,680.7 859.6,598.7 858.5,592.0 800.0,672.0 783.0,708.0" fill="#BD6F12"/>
<polygon points="724.0,694.0 757.0,665.0 811.0,585.0 848.0,594.0 795.0,672.0 776.0,712.0 746.0,722.0" fill="#CC8422"/>
<path d="M757.0 668.0L795.0 674.0M761.5 661.2L799.4 667.4M766.0 654.3L803.8 660.8M770.5 647.5L808.2 654.2M775.0 640.7L812.7 647.7M779.5 633.8L817.1 641.1M784.0 627.0L821.5 634.5M788.5 620.2L825.9 627.9M793.0 613.3L830.3 621.3M797.5 606.5L834.8 614.8M802.0 599.7L839.2 608.2M806.5 592.8L843.6 601.6M811.0 586.0L848.0 595.0" stroke="#A9640E" stroke-width="2.800" fill="none"/>
<path d="M757 668L795 674M748 676L790 688M738 686L782 702M728 694L776 714M746 722L776 714" stroke="#A9640E" stroke-width="2.400" fill="none"/>
<polygon points="848.0,594.0 858.5,592.0 859.6,598.7 803.8,680.7 795.0,674.0" fill="#CB8320"/>
<path d="M840 557L779 650" stroke="#C07820" stroke-width="2.200" fill="none"/>
<path d="M834.0 566.0V593.0M828.0 575.2V601.8M822.0 584.5V610.5M816.0 593.8V619.2M810.0 603.0V628.0M804.0 612.2V636.8M798.0 621.5V645.5M792.0 630.8V654.2M786.0 640.0V663.0" stroke="#C27C28" stroke-width="1.600" fill="none"/>
<path d="M849.800 557V593M858.800 557V595M841.400 557V590" stroke="#C27C28" stroke-width="1.800" fill="none"/>
<path d="M779.700 647L782.700 704" stroke="#B8701E" stroke-width="2.400" fill="none"/>
<polygon points="786.3,689.5 824.5,687.3 826.7,707.0 833.3,709.0 834.4,739.8 788.5,751.8 784.0,713.5" fill="#0B0B72"/>
<polygon points="789.0,692.0 822.0,690.0 824.0,722.0 792.0,728.0" fill="#12128A"/>
<polygon points="784.0,713.5 790.0,711.0 794.0,747.0 788.5,751.8" fill="#070750"/>
<polygon points="826.7,707.0 833.3,709.0 834.4,739.8 829.0,741.0" fill="#1A1A96"/>
<polygon points="792.0,728.0 824.0,722.0 829.0,741.0 794.0,749.0" fill="#0D0D7C"/>
<polygon points="556.5,611.0 586.0,636.5 564.0,641.5" fill="#B6B6B6"/>
<polygon points="481.0,664.0 502.0,690.0 557.0,764.0 597.0,819.0 552.0,835.5" fill="#C5C5C5"/>
<polygon points="512.0,709.7 516.6,709.7 557.0,764.0 597.0,819.0 572.0,829.5 568.5,806.0" fill="#ADADAD"/>
<polygon points="567.4,806.0 569.0,805.0 580.0,823.5 578.0,824.5" fill="#F4F4F4"/>
<polygon points="577.0,640.0 594.0,640.0 622.0,747.0 631.0,792.0 610.0,799.4 602.4,765.5" fill="#DCDCDC"/>
<polygon points="575.4,683.5 582.3,682.3 586.5,700.0 603.0,768.0 598.0,759.0 584.8,724.0" fill="#BABABA"/>
<polygon points="582.3,682.3 586.5,681.5 606.0,768.0 603.0,768.0 586.5,700.0" fill="#E9E9E9"/>
<polygon points="556.5,610.7 563.0,608.0 596.0,636.5 586.0,637.4" fill="#FFFFFF"/>
<polygon points="595.4,636.6 479.8,662.2 483.0,666.5 589.0,641.5" fill="#FFFFFF"/>
<polygon points="480.0,663.0 491.0,661.0 516.0,690.0 571.0,764.0 614.0,821.0 597.0,819.0 557.0,764.0 502.0,690.0" fill="#FFFFFF"/>
<polygon points="448.0,711.6 508.5,696.6 510.5,700.2 448.0,716.0" fill="#FFFFFF"/>
<polygon points="515.0,698.5 583.5,677.9 585.0,680.7 517.0,701.6" fill="#EFEFEF"/>
<polygon points="448.0,880.0 614.0,822.0 1030.0,668.0 1203.0,604.0 1165.0,748.0 741.0,986.0 723.0,996.0 448.0,996.0" fill="#DFDFDF"/>
<polygon points="448.0,880.0 614.0,822.0 658.0,996.0 448.0,996.0" fill="#DDDDDD"/>
<polygon points="448.0,877.0 614.5,820.0 1203.0,602.0 1203.5,604.5 1100.0,643.2 940.0,705.0 619.0,829.0 448.0,885.5" fill="#FFFFFF"/>
<path d="M615 823L637.400 914L658 996" stroke="#A9A9A9" stroke-width="2.600" fill="none"/>
<path d="M617.500 823L660.500 996" stroke="#EDEDED" stroke-width="1" fill="none"/>
<polygon points="722.5,825.0 801.2,793.8 807.5,891.2 737.5,926.2" fill="#EFEFEF"/>
<polygon points="726.5,827.5 798.0,799.5 803.5,885.0 740.0,917.0" fill="#D5D5D5"/>
<path d="M722.500 825L737.500 926.200L807.500 891.200" stroke="#F8F8F8" stroke-width="1.500" fill="none"/>
<path d="M798 799.500L803.500 885" stroke="#C4C4C4" stroke-width="1" fill="none"/>
<path d="M717 810l21 150M801 780l9 170" stroke="#D6D6D6" stroke-width=".8" fill="none" stroke-dasharray="6 3"/>
<polygon points="868.0,768.8 958.8,736.0 960.5,836.2 868.0,887.0" fill="#ECECEC"/>
<polygon points="871.0,770.5 951.0,741.0 952.0,834.0 880.0,872.0 872.0,876.0" fill="#E5E5E5"/>
<polygon points="871.0,770.5 880.0,767.0 880.0,872.0 872.0,876.0" fill="#E9E9E9"/>
<polygon points="895.0,765.0 937.5,748.8 931.0,763.8 900.0,772.5" fill="#F3E9B8"/>
<polygon points="933.8,761.0 953.8,763.8 950.0,818.8 918.8,810.0 917.5,790.0 923.0,772.0" fill="#7174A2"/>
<polygon points="917.5,790.0 950.0,797.0 950.0,818.8 918.8,810.0" fill="#666995"/>
<path d="M868 887L960.500 836.200" stroke="#F8F8F8" stroke-width="2" fill="none"/>
<path d="M951 741L952 834" stroke="#CFCFCF" stroke-width="1" fill="none"/>
<path d="M958.800 736L960.500 836.200L966 860" stroke="#D2D2D2" stroke-width=".8" fill="none"/>
<polygon points="1165.0,748.0 1213.0,772.0 862.5,996.0 723.0,996.0 741.0,986.0" fill="#FFFFFF"/>
<path d="M1203 603L1165 748" stroke="#E9E9E9" stroke-width="1" fill="none"/>
<g>
<rect x="448" y="557" width="56" height="61" fill="#EFEEED"/>
<rect x="491" y="600" width="13" height="18" fill="#8E8E8E"/><path d="M496 604v14M500 604l4-4M496 604h6" stroke="#222" stroke-width="1.600" fill="none"/>
<path d="M463 558.500h41M489.300 558v20M489.300 578.500h15M448.500 573v45M449 598h19M455 603h7M455 603v11M455 608h6M455 614h8" stroke="#141414" stroke-width="1.300" fill="none"/>
<ellipse cx="497.500" cy="567" rx="3" ry="5" fill="none" stroke="#141414" stroke-width="1.200"/>
<ellipse cx="476.800" cy="588.600" rx="26.900" ry="28" fill="#F0EFEE" fill-opacity=".55"/>
<rect x="469" y="578.500" width="21" height="37" fill="#E9E9E8" fill-opacity=".8"/>
<path d="M455 557l-8 11h4.500v5.500h8v-5.500h3z" fill="#3A6B1F"/>
<path d="M455.500 569.500h10.500v6.500h-10.500z" fill="#EEDB3C" stroke="#D8C02A" stroke-width=".6"/>
<ellipse cx="476.800" cy="588.600" rx="26.900" ry="28" fill="none" stroke="#0a0a0a" stroke-width="1.700"/>
<path d="M0 -8.200L8.200 2.300H4V8H-4V2.300H-8.200Z" transform="translate(476.8 569.7) rotate(0)" fill="url(#ga)" stroke="#3C8A0A" stroke-width="1"/>
<path d="M0 -5.500L5 1H2V6.500H-2V1H-5Z" transform="translate(476.8 569.7) rotate(0)" fill="#8FD84A" fill-opacity=".6"/>
<path d="M0 -8.200L8.200 2.300H4V8H-4V2.300H-8.200Z" transform="translate(493.6 588.5) rotate(90)" fill="url(#ga)" stroke="#3C8A0A" stroke-width="1"/>
<path d="M0 -5.500L5 1H2V6.500H-2V1H-5Z" transform="translate(493.6 588.5) rotate(90)" fill="#8FD84A" fill-opacity=".6"/>
<path d="M0 -8.200L8.200 2.300H4V8H-4V2.300H-8.200Z" transform="translate(476.8 606.1) rotate(180)" fill="url(#ga)" stroke="#3C8A0A" stroke-width="1"/>
<path d="M0 -5.500L5 1H2V6.500H-2V1H-5Z" transform="translate(476.8 606.1) rotate(180)" fill="#8FD84A" fill-opacity=".6"/>
<path d="M0 -8.200L8.200 2.300H4V8H-4V2.300H-8.200Z" transform="translate(460.0 588.5) rotate(270)" fill="url(#ga)" stroke="#3C8A0A" stroke-width="1"/>
<path d="M0 -5.500L5 1H2V6.500H-2V1H-5Z" transform="translate(460.0 588.5) rotate(270)" fill="#8FD84A" fill-opacity=".6"/>
<path d="M477 579.200l8 8.800h-16z" fill="#66BE28" stroke="#2F7A08" stroke-width=".8"/><path d="M477 597.800l8-8.600h-16z" fill="#4FA512" stroke="#2F7A08" stroke-width=".8"/>
<path d="M469 588.600h16" stroke="#F4F4F0" stroke-width="1.200"/>
</g>
</g></svg>
<div class="a" style="left:0;top:998px;width:1280px;height:1px;background:#62779B"></div>
<div id="bottom" class="a">
<svg style="left:2px;top:4px" width="20" height="19" viewBox="0 0 20 19"><rect x=".5" y=".5" width="19" height="18" rx="2" fill="#D3D7CF" stroke="#7E8378"/><rect x="3.500" y="6.500" width="13" height="9" fill="#BFC4BA" stroke="#6F7469"/><path d="M3.500 6.500l3-3h7l3 3" fill="#E3E6DF" stroke="#6F7469"/><circle cx="10" cy="11" r="2.500" fill="#EEF0EB" stroke="#6F7469"/></svg>
<svg style="left:26px;top:4px" width="6" height="19" viewBox="0 0 6 19"><g fill="#BDBBB7"><circle cx="1.500" cy="1.500" r=".8"/><circle cx="4.500" cy="3.500" r=".8"/><circle cx="1.500" cy="5.500" r=".8"/><circle cx="4.500" cy="7.500" r=".8"/><circle cx="1.500" cy="9.500" r=".8"/><circle cx="4.500" cy="11.500" r=".8"/><circle cx="1.500" cy="13.500" r=".8"/><circle cx="4.500" cy="15.500" r=".8"/><circle cx="1.500" cy="17.500" r=".8"/></g></svg>
<div class="task" style="left:35px;width:200px;top:2px;height:22px;background:linear-gradient(#FAFAF9,#EDECEA)">
<svg style="left:6px;top:1px" width="18" height="18" viewBox="0 0 25 24"><circle cx="12.500" cy="12" r="10.500" fill="#E8741C"/><circle cx="12" cy="10" r="7" fill="#3B6FC4"/><path d="M3 8C5 5 8 5.500 10 8c-2 0-3 2-2 4 2 3 7 3 9 0 1 4-2 9-7 9C5 21 1 15 3 8z" fill="#E8741C"/><path d="M5 17c3 4 10 5 14 0-2 5-10 6-14 0z" fill="#C0341A"/></svg>
<span class="t" style="left:30px;top:1px;color:#1a1a1a;font-size:13.800px">software recommend…</span></div>
<div class="task" style="left:237px;width:201px;top:2px;height:22px;background:linear-gradient(#D2D0CC,#DDDBD8);border-color:#8F8D89">
<svg style="left:8px;top:2px" width="18" height="17" viewBox="3 28 18 17"><path d="M12.500 29.500L20 35.500L11 44L4 33Z" fill="#FBFAF6" stroke="#4a4a44" stroke-width="1" stroke-dasharray="1.500 .8"/><path d="M6 33.500l4-1 1.500 2.500-3 1.500z" fill="#9A8A48"/><path d="M14.500 36l3.500 .5-4.500 4.500-1-2z" fill="#8A6E3A"/><path d="M12.300 30.500l1.600 .2.300 3.800-1.500-.5z" fill="#0a0a0a"/><path d="M9.500 39.500l3-1.500" stroke="#444" stroke-width="1"/><path d="M11 44l-1.500-2.500" stroke="#777" stroke-width="1"/></svg>
<span class="t" style="left:31px;top:1px;color:#1a1a1a;font-size:13.800px">* Untitled - Sweet Ho…</span></div>
<svg style="left:1026px;top:2px" width="22" height="23" viewBox="0 0 22 23"><path d="M3.500 5.500l2 15.500h11l2-15.500z" fill="#C9C9C6" stroke="#5a5a5a"/><path d="M5 8l12 11M8 7l9 8M11 7l6 5M4.500 11l9 9M5 15l5 5M17 8L5.500 19M14 7L5 15M11 7l-6 5M17.500 11l-9 9M17 15l-5 5" stroke="#8a8a88" stroke-width=".7"/><ellipse cx="11" cy="5" rx="8.500" ry="3" fill="#E9E9E7" stroke="#555"/><path d="M7 4.500l3-1.500 4 1 1 2-5 .5z" fill="#fff" stroke="#999" stroke-width=".6"/></svg>
<div class="a" style="left:1177px;top:2px;width:101px;height:22px;background:#B8B6B2;border-radius:3px;border:1px solid #9C9A96;box-sizing:border-box"></div>
<div class="a" style="left:1178px;top:3px;width:25px;height:20px;background:#CBDCF3;border:1px solid #fff;box-sizing:border-box"></div>
<svg style="left:1182px;top:5px" width="18" height="17" viewBox="3 28 18 17"><path d="M12.500 29.500L20 35.500L11 44L4 33Z" fill="#FBFAF6" stroke="#4a4a44" stroke-width="1" stroke-dasharray="1.500 .8"/><path d="M6 33.500l4-1 1.500 2.500-3 1.500z" fill="#9A8A48"/><path d="M14.500 36l3.500 .5-4.500 4.500-1-2z" fill="#8A6E3A"/><path d="M12.300 30.500l1.600 .2.300 3.800-1.500-.5z" fill="#0a0a0a"/><path d="M9.500 39.500l3-1.500" stroke="#444" stroke-width="1"/><path d="M11 44l-1.500-2.500" stroke="#777" stroke-width="1"/></svg>
<div class="a" style="left:1203px;top:3px;width:1px;height:20px;background:#CFCDC9"></div>
<div class="a" style="left:1228px;top:3px;width:1px;height:20px;background:#CFCDC9"></div>
<div class="a" style="left:1253px;top:3px;width:1px;height:20px;background:#CFCDC9"></div>
</div>

</div>
</body>
</html>
